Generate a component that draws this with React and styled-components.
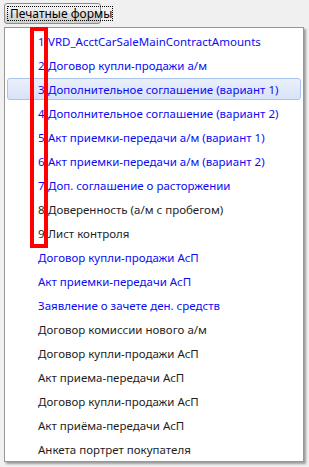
import React from 'react';
import styled, { createGlobalStyle } from 'styled-components';

// print forms list: number shown only for the first nine
const forms = [
  { title: 'VRD_AcctCarSaleMainContractAmounts', num: 1, blue: true },
  { title: 'Договор купли-продажи а/м', num: 2, blue: true },
  { title: 'Дополнительное соглашение (вариант 1)', num: 3, blue: true, active: true },
  { title: 'Дополнительное соглашение (вариант 2)', num: 4, blue: true },
  { title: 'Акт приемки-передачи а/м (вариант 1)', num: 5, blue: true },
  { title: 'Акт приемки-передачи а/м (вариант 2)', num: 6, blue: true },
  { title: 'Доп. соглашение о расторжении', num: 7, blue: true },
  { title: 'Доверенность (а/м с пробегом)', num: 8 },
  { title: 'Лист контроля', num: 9 },
  { title: 'Договор купли-продажи АсП', blue: true },
  { title: 'Акт приемки-передачи АсП', blue: true },
  { title: 'Заявление о зачете ден. средств', blue: true },
  { title: 'Договор комиссии нового а/м' },
  { title: 'Договор купли-продажи АсП' },
  { title: 'Акт приема-передачи АсП' },
  { title: 'Договор купли-продажи АсП' },
  { title: 'Акт приёма-передачи АсП' },
  { title: 'Анкета портрет покупателя' }
];

export default function App() {
  return (
    <>
      <GlobalStyle />
      <Page>
        <PrintButton>
          <FocusRect>Печатные формы</FocusRect>
        </PrintButton>
        <Menu>
          {forms.map((item, i) => (
            <MenuItem key={i} $active={item.active} $blue={item.blue}>
              {item.num && <Num>{item.num}</Num>}
              {item.title}
            </MenuItem>
          ))}
          <Marker />
        </Menu>
      </Page>
    </>
  );
}

const GlobalStyle = createGlobalStyle`
body {
  margin: 0;
  background: #f0f0f0;
  font-family: 'Noto Sans', 'Open Sans', sans-serif;
}
`;

const Page = styled.div`
display: flex;
flex-direction: column;
align-items: flex-start;
width: 309px;
height: 467px;
padding: 3px 0 0 4px;
box-sizing: border-box;
`;

const PrintButton = styled.div`
display: flex;
width: 97px;
height: 21px;
box-sizing: border-box;
padding: 2px;
border: 1px solid #8d8d8d;
border-radius: 3px;
background: linear-gradient(#f2f2f2, #ebebeb 45%, #dddddd 50%, #cfcfcf);
font-size: 12px;
color: #000;
`;

const FocusRect = styled.span`
flex: 1;
display: flex;
align-items: center;
padding-left: 2px;
border: 1px dotted #000;
line-height: 1;
white-space: nowrap;
`;

const Menu = styled.div`
position: relative;
width: 300px;
margin-top: 3px;
box-sizing: border-box;
border: 1px solid #979797;
background: #fff;
padding: 1px 2px 0 2px;
box-shadow: 2px 2px 2px rgba(0, 0, 0, 0.35);
`;

const MenuItem = styled.div`
display: flex;
align-items: center;
height: ${p => (p.$active ? '22px' : '24px')};
margin: ${p => (p.$active ? '1px 0' : '0')};
box-sizing: border-box;
padding-left: 30px;
font-size: 11.5px;
white-space: nowrap;
color: ${p => (p.$blue ? '#0c0cf2' : '#1e1e1e')};
border: 1px solid ${p => (p.$active ? '#a8c4ee' : 'transparent')};
border-radius: 3px;
background: ${p => (p.$active ? 'linear-gradient(#eaf0fc, #d8e3f8)' : 'transparent')};
`;

const Num = styled.span`
width: 10px;
`;

const Marker = styled.div`
position: absolute;
left: 25px;
top: -1px;
width: 18px;
height: 221px;
box-sizing: border-box;
border: 4px solid #ff0000;
`;
